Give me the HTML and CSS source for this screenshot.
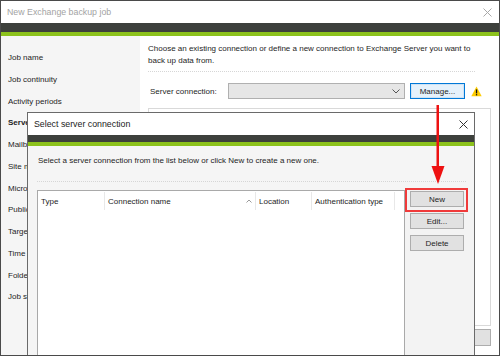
FILE: index.html
```html
<!DOCTYPE html>
<html>
<head>
<meta charset="utf-8">
<link rel="stylesheet" href="styles.css">
</head>
<body>
<div class="window">
  <div class="titlebar">
    <span class="title">New Exchange backup job</span>
    <svg class="close close-outer" width="9" height="9" viewBox="0 0 9 9"><path d="M0.5 0.5L8.5 8.5M8.5 0.5L0.5 8.5" stroke="#a8a8a8" stroke-width="1"/></svg>
  </div>
  <div class="band"></div>
  <div class="green"></div>
  <div class="main">
    <div class="sidebar">
      <div class="nav">Job name</div>
      <div class="nav">Job continuity</div>
      <div class="nav">Activity periods</div>
      <div class="nav active">Servers</div>
      <div class="nav">Mailboxes</div>
      <div class="nav">Site mailboxes</div>
      <div class="nav">Microsoft 365 groups</div>
      <div class="nav">Public folders</div>
      <div class="nav">Target</div>
      <div class="nav">Time filter</div>
      <div class="nav">Folder filter</div>
      <div class="nav">Job summary</div>
    </div>
    <div class="content">
      <p class="intro">Choose an existing connection or define a new connection to Exchange Server you want to back up data from.</p>
      <div class="dots"></div>
      <div class="server-row">
        <span class="label">Server connection:</span>
        <div class="combo">
          <svg width="8" height="5" viewBox="0 0 8 5"><path d="M0.5 0.5L4 4L7.5 0.5" fill="none" stroke="#555" stroke-width="1"/></svg>
        </div>
        <div class="btn manage">Manage...</div>
        <svg class="warn" width="11" height="11" viewBox="0 0 11 11"><path d="M5.5 0.5L10.7 10.3H0.3Z" fill="#ffcc00"/><rect x="4.9" y="3.4" width="1.3" height="4" fill="#111"/><rect x="4.9" y="8.1" width="1.3" height="1.3" fill="#111"/></svg>
      </div>
      <div class="panel"></div>
      <div class="bottom-row"><div class="btn next">Next</div></div>
    </div>
  </div>

  <div class="dialog">
    <div class="d-titlebar">
      <span class="d-title">Select server connection</span>
      <svg class="close" width="9" height="9" viewBox="0 0 9 9"><path d="M0.5 0.5L8.5 8.5M8.5 0.5L0.5 8.5" stroke="#333" stroke-width="1"/></svg>
    </div>
    <div class="d-band"></div>
    <div class="d-green"></div>
    <div class="d-body">
      <p class="d-text">Select a server connection from the list below or click New to create a new one.</p>
      <div class="d-dots"></div>
      <div class="d-row">
        <div class="list">
          <div class="list-head">
            <div class="col c-type">Type</div>
            <div class="col c-name"><span>Connection name</span><svg width="6" height="4" viewBox="0 0 6 4"><path d="M0.5 3.5L3 1L5.5 3.5" fill="none" stroke="#9a9a9a" stroke-width="1"/></svg></div>
            <div class="col c-loc">Location</div>
            <div class="col c-auth">Authentication type</div>
          </div>
        </div>
        <div class="btn-col">
          <div class="btn">New</div>
          <div class="btn">Edit...</div>
          <div class="btn">Delete</div>
        </div>
      </div>
    </div>
  </div>

  <div class="highlight"></div>
  <svg class="arrow" width="16" height="82" viewBox="0 0 16 82"><rect x="6.5" y="0" width="2.5" height="64" fill="#ee1111"/><path d="M1.5 61L14.5 61L8 79Z" fill="#ee1111"/></svg>
</div>
</body>
</html>
```

FILE: styles.css
```css
* { box-sizing: border-box; }
html, body { margin: 0; padding: 0; }
body {
  width: 500px;
  height: 356px;
  overflow: hidden;
  font-family: "Liberation Sans", Arial, sans-serif;
  font-size: 8px;
  color: #1e1e1e;
  background: #fff;
}
.window {
  position: relative;
  width: 500px;
  height: 356px;
  border: 1px solid #4a4a4a;
  display: flex;
  flex-direction: column;
  overflow: hidden;
  background: #fff;
}
.titlebar {
  height: 22px;
  flex: none;
  display: flex;
  align-items: center;
  justify-content: space-between;
  padding: 0 7px 0 6px;
  background: #fff;
}
.title { font-size: 8.8px; color: #a3a3a3; }
.close { display: block; }
.band { height: 9px; flex: none; background: #3d403c; }
.green { height: 4px; flex: none; background: #8cc21c; }
.main { flex: 1; display: flex; min-height: 0; }
.sidebar {
  width: 139px;
  flex: none;
  background: #f5f5f5;
  padding-top: 11px;
}
.nav {
  height: 21.75px;
  line-height: 21.75px;
  padding-left: 7px;
  white-space: nowrap;
  overflow: hidden;
}
.nav.active { font-weight: bold; }
.content {
  flex: 1;
  display: flex;
  flex-direction: column;
  padding: 7px 8px 9px 8px;
  background: #fff;
}
.intro { margin: 0; line-height: 12px; padding-right: 10px; }
.dots {
  margin: 4px 16px 0 0;
  border-top: 1px dotted #d6d6d6;
}
.server-row {
  margin-top: 11px;
  height: 16px;
  display: flex;
  align-items: center;
}
.label { width: 80px; padding-left: 2px; }
.combo {
  width: 177px;
  height: 16px;
  background: #e6e6e6;
  border: 1px solid #b0b0b0;
  display: flex;
  align-items: center;
  justify-content: flex-end;
  padding-right: 4px;
}
.btn {
  height: 16px;
  background: #e1e1e1;
  border: 1px solid #adadad;
  display: flex;
  align-items: center;
  justify-content: center;
  font-size: 8px;
  color: #1e1e1e;
}
.manage {
  width: 55px;
  margin-left: 5px;
  border-color: #0078d7;
  background: #e5f1fb;
  box-shadow: inset 0 0 0 1px #cfe3f5;
}
.warn { margin-left: 6px; display: block; }
.panel {
  flex: 1;
  margin-top: 9px;
  border: 1px solid #d9d9d9;
}
.bottom-row {
  margin-top: 3px;
  display: flex;
  justify-content: flex-end;
}
.next { width: 60px; height: 17px; }

.dialog {
  position: absolute;
  left: 26px;
  top: 111px;
  width: 448px;
  height: 260px;
  border: 1px solid #6a6a6a;
  display: flex;
  flex-direction: column;
  background: #f5f5f5;
}
.d-titlebar {
  height: 22px;
  flex: none;
  display: flex;
  align-items: center;
  justify-content: space-between;
  padding: 0 6px 0 6px;
  background: #fff;
}
.d-title { font-size: 8.8px; color: #222; }
.d-band { height: 7px; flex: none; background: #3d403c; }
.d-green { height: 4px; flex: none; background: #8cc21c; }
.d-body {
  flex: 1;
  display: flex;
  flex-direction: column;
  padding: 9px 0 0 9px;
}
.d-text { margin: 0 0 0 1px; line-height: 12px; }
.d-dots {
  margin: 14px 8px 0 0;
  border-top: 1px dotted #d6d6d6;
}
.d-row {
  margin-top: 8px;
  flex: 1;
  display: flex;
}
.list {
  width: 368px;
  background: #fff;
  border: 1px solid #a9a9a9;
  border-bottom: none;
}
.list-head {
  display: flex;
  height: 19px;
  padding-top: 1px;
}
.col {
  display: flex;
  align-items: center;
  padding-left: 3px;
  border-right: 1px solid #e8e8e8;
  white-space: nowrap;
}
.c-type { width: 67px; padding-left: 3px; }
.c-name { width: 151px; justify-content: space-between; padding-right: 3px; }
.c-loc { width: 56px; }
.c-auth { width: 83px; }
.btn-col {
  flex: 1;
  display: flex;
  flex-direction: column;
  gap: 6px;
  padding: 1px 0 0 5px;
  background: #f3f3f3;
}
.btn-col .btn { width: 54px; }

.highlight {
  position: absolute;
  left: 404px;
  top: 187px;
  width: 63px;
  height: 24px;
  border: 2px solid #f03a3a;
}
.arrow {
  position: absolute;
  left: 429px;
  top: 104px;
  display: block;
}
```
